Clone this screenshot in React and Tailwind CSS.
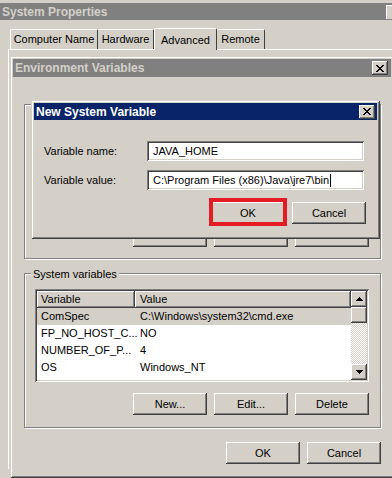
import React from 'react';

const raised =
  'bg-[#d4d0c8] shadow-[inset_-1px_-1px_0_#404040,inset_1px_1px_0_#ffffff,inset_-2px_-2px_0_#808080]';
const sunken =
  'shadow-[inset_1px_1px_0_#808080,inset_-1px_-1px_0_#ffffff,inset_2px_2px_0_#404040,inset_-2px_-2px_0_#d4d0c8]';
const etched = 'border border-[#808080] shadow-[1px_1px_0_#ffffff,inset_1px_1px_0_#ffffff]';
const frame =
  'bg-[#d4d0c8] shadow-[inset_1px_1px_0_#d4d0c8,inset_-1px_-1px_0_#404040,inset_2px_2px_0_#ffffff,inset_-2px_-2px_0_#808080]';

const CloseX = () => (
  <svg width="8" height="7" viewBox="0 0 8 7" shapeRendering="crispEdges">
    <path d="M0 0h2v1h-2zM6 0h2v1h-2zM1 1h2v1h-2zM5 1h2v1h-2zM2 2h4v1h-4zM3 3h2v1h-2zM2 4h4v1h-4zM1 5h2v1h-2zM5 5h2v1h-2zM0 6h2v1h-2zM6 6h2v1h-2z" fill="#000" />
  </svg>
);

const CloseButton = () => (
  <div className={`w-[16px] h-[14px] flex items-center justify-center ${raised}`}>
    <CloseX />
  </div>
);

const Arrow = ({ down }) => (
  <svg width="7" height="4" viewBox="0 0 7 4" shapeRendering="crispEdges">
    {down ? (
      <path d="M0 0h7v1h-7zM1 1h5v1h-5zM2 2h3v1h-3zM3 3h1v1h-1z" fill="#000" />
    ) : (
      <path d="M3 0h1v1h-1zM2 1h3v1h-3zM1 2h5v1h-5zM0 3h7v1h-7z" fill="#000" />
    )}
  </svg>
);

const Button = ({ children, className = '' }) => (
  <div className={`w-[74px] h-[22px] flex items-center justify-center ${raised} ${className}`}>
    {children}
  </div>
);

const rows = [
  ['ComSpec', 'C:\\Windows\\system32\\cmd.exe', true],
  ['FP_NO_HOST_C...', 'NO'],
  ['NUMBER_OF_P...', '4'],
  ['OS', 'Windows_NT'],
];

export default function App() {
  return (
    <div className="relative w-[392px] h-[478px] overflow-hidden bg-[#d4d0c8] text-[11px] text-black font-['Liberation_Sans',Arial,sans-serif]">
      {/* System Properties window */}
      <div className="pt-[3px]">
        <div className="h-[17px] bg-[#808080] flex items-center justify-between pl-[2px] pr-0">
          <span className="font-bold text-[12px] text-[#d4d0c8]">System Properties</span>
          <div className="w-[6px] h-[14px] bg-[#d4d0c8] shadow-[inset_1px_1px_0_#ffffff]" />
        </div>
        <div className="h-[22px] mt-[7px] pl-[10px] flex items-end">
          <div className="w-[88px] h-[20px] flex items-center justify-center border-l border-t border-white border-r border-r-[#404040] rounded-t-[2px]">
            Computer Name
          </div>
          <div className="w-[56px] h-[20px] flex items-center justify-center border-t border-white border-r border-r-[#404040] rounded-t-[2px]">
            Hardware
          </div>
          <div className="w-[63px] h-[22px] -mb-[1px] bg-[#d4d0c8] relative flex items-start pt-[3px] justify-center border-l border-t border-white border-r border-r-[#404040] rounded-t-[2px]">
            Advanced
          </div>
          <div className="w-[48px] h-[20px] flex items-center justify-center border-t border-white border-r border-r-[#404040] rounded-t-[2px]">
            Remote
          </div>
        </div>
        <div className="ml-[8px] h-[420px] border-t border-l border-white" />
      </div>

      {/* Environment Variables dialog */}
      <div className={`absolute left-[10px] top-[56px] w-[384px] h-[422px] p-[3px] flex flex-col ${frame}`}>
        <div className="h-[18px] bg-[#808080] flex items-center justify-between pl-[2px] pr-[3px]">
          <span className="font-bold text-[12px] text-[#d4d0c8]">Environment Variables</span>
          <CloseButton />
        </div>

        {/* User variables group (hidden behind) */}
        <div className={`ml-[11px] mt-[27px] w-[357px] h-[155px] flex flex-col justify-end items-end pr-[11px] pb-[11px] ${etched}`}>
          <div className="flex gap-[7px]">
            <Button />
            <Button />
            <Button />
          </div>
        </div>

        {/* System variables group */}
        <div className={`relative ml-[11px] mt-[14px] w-[357px] h-[155px] flex flex-col ${etched}`}>
          <span className="absolute -top-[8px] left-[6px] px-[2px] bg-[#d4d0c8]">System variables</span>
          <div className={`ml-[10px] mt-[15px] w-[334px] h-[93px] bg-white p-[2px] flex ${sunken}`}>
            <div className="flex-1 overflow-hidden">
              <div className="flex h-[17px]">
                <div className={`w-[98px] pl-[4px] flex items-center ${raised}`}>Variable</div>
                <div className={`flex-1 pl-[5px] flex items-center ${raised}`}>Value</div>
              </div>
              {rows.map(([name, value, sel]) => (
                <div key={name} className={`flex h-[17px] items-center ${sel ? 'bg-[#d4d0c8]' : ''}`}>
                  <div className="w-[98px] pl-[4px] whitespace-nowrap">{name}</div>
                  <div className="flex-1 pl-[5px] whitespace-nowrap">{value}</div>
                </div>
              ))}
            </div>
            <div className="w-[16px] flex flex-col">
              <div className={`h-[16px] flex items-center justify-center ${raised}`}>
                <Arrow />
              </div>
              <div className={`h-[16px] ${raised}`} />
              <div className="flex-1 bg-[repeating-conic-gradient(#d4d0c8_0_25%,#ffffff_0_50%)] bg-[length:2px_2px]" />
              <div className={`h-[16px] flex items-center justify-center ${raised}`}>
                <Arrow down />
              </div>
            </div>
          </div>
          <div className="mt-[11px] flex justify-end gap-[7px] pr-[11px]">
            <Button>New...</Button>
            <Button>Edit...</Button>
            <Button>Delete</Button>
          </div>
        </div>

        <div className="mt-[14px] w-[368px] flex justify-end gap-[7px]">
          <Button>OK</Button>
          <Button>Cancel</Button>
        </div>
      </div>

      {/* New System Variable dialog */}
      <div className={`absolute left-[31px] top-[100px] w-[349px] h-[139px] p-[3px] flex flex-col ${frame}`}>
        <div className="h-[17px] bg-[#0a246a] flex items-center justify-between pl-[2px] pr-[2px]">
          <span className="font-bold text-[12px] text-white">New System Variable</span>
          <CloseButton />
        </div>
        <div className="mt-[21px] pl-[10px] flex items-center">
          <span className="w-[103px]">Variable name:</span>
          <div className={`w-[217px] h-[20px] bg-white pl-[6px] flex items-center ${sunken}`}>JAVA_HOME</div>
        </div>
        <div className="mt-[9px] pl-[10px] flex items-center">
          <span className="w-[103px]">Variable value:</span>
          <div className={`w-[217px] h-[20px] bg-white pl-[6px] flex items-center whitespace-nowrap ${sunken}`}>
            C:\Program Files (x86)\Java\jre7\bin
            <span className="w-px h-[13px] bg-black ml-[1px]" />
          </div>
        </div>
        <div className="mt-[12px] flex justify-end gap-[7px] pr-[11px]">
          <div className="relative">
            <Button>OK</Button>
            <div className="absolute -left-[2px] -top-[4px] w-[78px] h-[28px] border-[4px] border-[#e41b23]" />
          </div>
          <Button>Cancel</Button>
        </div>
      </div>
    </div>
  );
}
